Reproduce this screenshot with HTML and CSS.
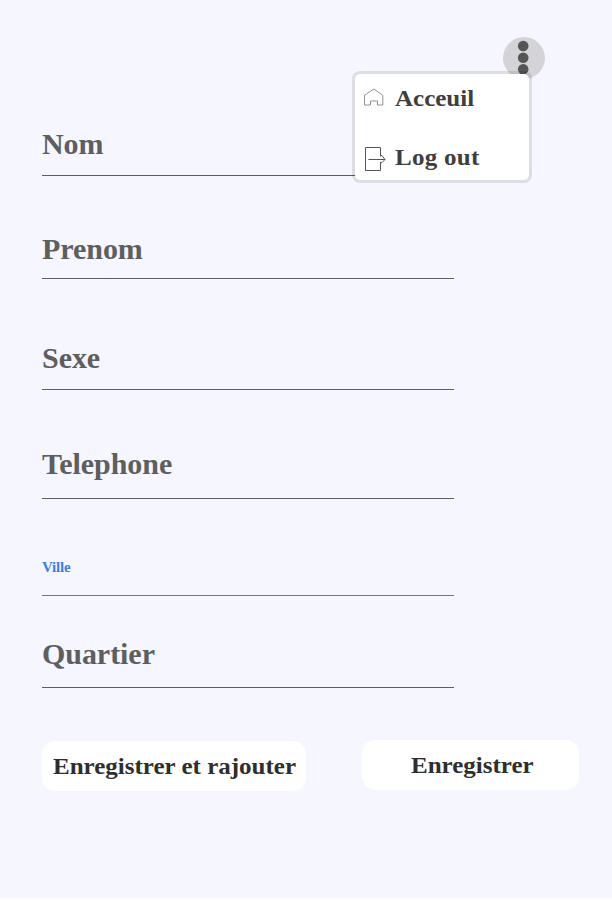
FILE: index.html
```html
<!DOCTYPE html>
<html lang="fr">
<head>
<meta charset="utf-8">
<title>Enregistrement</title>
<link rel="stylesheet" href="styles.css">
</head>
<body>
<main class="page">
  <form class="form">
    <div class="field field-nom"><label>Nom</label></div>
    <div class="field field-prenom"><label>Prenom</label></div>
    <div class="field field-sexe"><label>Sexe</label></div>
    <div class="field field-telephone"><label>Telephone</label></div>
    <div class="field field-ville active"><label>Ville</label></div>
    <div class="field field-quartier"><label>Quartier</label></div>
  </form>
  <div class="actions">
    <button class="btn btn-more" type="button"><span class="wide">Enregistrer et rajouter</span></button>
    <button class="btn btn-save" type="button"><span class="wide">Enregistrer</span></button>
  </div>
  <button class="menu-toggle" type="button" aria-label="Menu">
    <svg width="42" height="42" viewBox="0 0 42 42"><circle cx="20.2" cy="9" r="5.3"/><circle cx="20.2" cy="20.7" r="5.3"/><circle cx="20.2" cy="32.3" r="5.3"/></svg>
  </button>
  <nav class="menu">
    <a class="item">
      <svg class="icon" width="24" height="28" viewBox="0 0 24 28"><path class="light" d="M1.5 21V11.3L10.8 5L19.8 11.3V21H14.5V17H7.5V21Z"/></svg>
      <span class="wide">Acceuil</span>
    </a>
    <a class="item item-logout">
      <svg class="icon" width="24" height="28" viewBox="0 0 24 28"><path d="M17.5 13.5V4.5H2.5V27.5H17.5V19M5.5 16.5H22M18 12.5H19L22 16.5L19 19.5L18 20"/></svg>
      <span class="wide">Log out</span>
    </a>
  </nav>
</main>
</body>
</html>
```

FILE: styles.css
```css
* { box-sizing: border-box; }

body {
  margin: 0;
  background: #fff;
  font-family: "Liberation Serif", "Times New Roman", serif;
  font-weight: 700;
}

.page {
  position: relative;
  height: 898px;
  background: #f5f6ff;
}

.form {
  width: 412px;
  margin-left: 42px;
}

.field {
  display: flex;
  align-items: flex-end;
  border-bottom: 1px solid #5e5e5e;
  color: #5e5e5e;
  font-size: 30px;
  line-height: 34px;
  letter-spacing: -0.05px;
}

.field-nom { height: 176px; padding-bottom: 14px; }
.field-prenom { height: 103px; padding-bottom: 12px; }
.field-sexe { height: 111px; padding-bottom: 14px; }
.field-telephone { height: 109px; padding-bottom: 17px; }
.field-ville { height: 97px; padding-bottom: 19px; }
.field-quartier { height: 92px; padding-bottom: 16px; }

.field.active {
  border-color: #3a7fe0;
  color: #3a7fe0;
  font-size: 15px;
  line-height: 17px;
  letter-spacing: -0.2px;
}

.actions {
  display: flex;
  align-items: flex-start;
  gap: 56px;
  padding: 52px 0 0 42px;
}

.btn {
  height: 50px;
  padding: 0;
  border: 0;
  border-radius: 13px;
  background: #fff;
  color: #2e2e2e;
  font: inherit;
  font-size: 24px;
  line-height: 28px;
  text-align: left;
  white-space: nowrap;
}

.btn-more { width: 264px; margin-top: 1px; padding-left: 11px; }
.btn-save { width: 217px; padding-left: 49px; }

.wide {
  display: inline-block;
  transform: scaleX(1.042);
  transform-origin: left center;
}

.menu-toggle {
  position: absolute;
  top: 37px;
  left: 503px;
  width: 42px;
  height: 42px;
  padding: 0;
  border: 0;
  border-radius: 50%;
  background: #d4d3d8;
}

.menu-toggle svg { display: block; fill: #555; }

.menu {
  position: absolute;
  top: 71px;
  left: 352px;
  width: 180px;
  height: 112px;
  display: flex;
  flex-direction: column;
  gap: 31px;
  padding: 10px 0 0 8px;
  border: 3px solid rgba(0, 0, 0, 0.1);
  border-radius: 8px;
  background: #fff;
  background-clip: padding-box;
}

.item {
  display: flex;
  align-items: center;
  gap: 8px;
  height: 28px;
  color: #3e3e3e;
  font-size: 24px;
  line-height: 28px;
}

.item-logout { letter-spacing: 0.25px; }

.icon {
  fill: none;
  stroke: #555;
  stroke-width: 1;
}

.icon .light { stroke: #777; stroke-width: 0.8; }
```
